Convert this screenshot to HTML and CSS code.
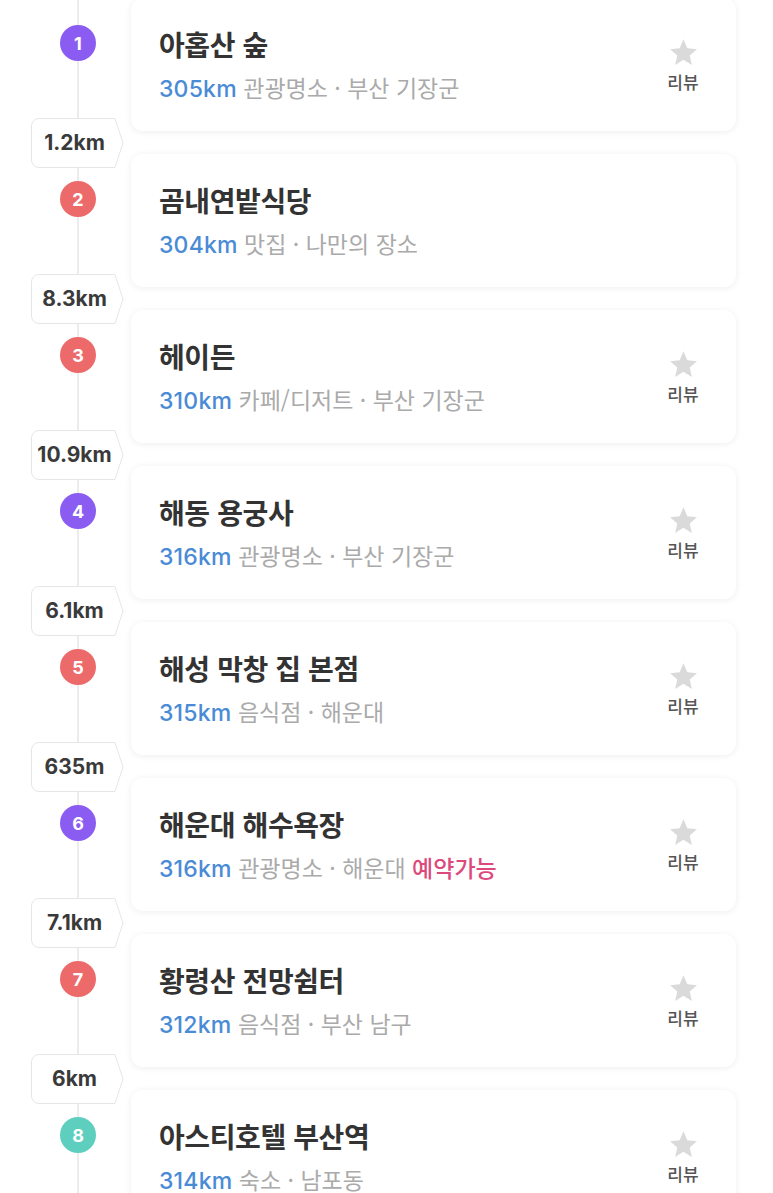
FILE: index.html
```html
<!DOCTYPE html>
<html lang="ko">
<head>
    <meta charset="UTF-8">
    <meta name="viewport" content="width=device-width, initial-scale=1.0">
    <title>일정 경로</title>
    <link rel="stylesheet" href="styles.css">
</head>
<body>

<div class="route">

    <!-- 1 -->
    <div class="stop">
        <div class="rail"><span class="pin purple">1</span></div>
        <div class="card">
            <div class="info">
                <div class="name">아홉산 숲</div>
                <div class="meta"><span class="far">305km</span> 관광명소 · 부산 기장군</div>
            </div>
            <div class="review">
                <svg viewBox="0 0 24 24"><path d="M12 1.8l3 6.9 7.4.7-5.6 4.9 1.7 7.3L12 17.7l-6.5 3.9 1.7-7.3-5.6-4.9 7.4-.7z"/></svg>
                <span>리뷰</span>
            </div>
        </div>
    </div>
    <div class="leg"><span class="dist">1.2km</span></div>

    <!-- 2 -->
    <div class="stop">
        <div class="rail"><span class="pin red">2</span></div>
        <div class="card">
            <div class="info">
                <div class="name">곰내연밭식당</div>
                <div class="meta"><span class="far">304km</span> 맛집 · 나만의 장소</div>
            </div>
        </div>
    </div>
    <div class="leg"><span class="dist">8.3km</span></div>

    <!-- 3 -->
    <div class="stop">
        <div class="rail"><span class="pin red">3</span></div>
        <div class="card">
            <div class="info">
                <div class="name">헤이든</div>
                <div class="meta"><span class="far">310km</span> 카페/디저트 · 부산 기장군</div>
            </div>
            <div class="review">
                <svg viewBox="0 0 24 24"><path d="M12 1.8l3 6.9 7.4.7-5.6 4.9 1.7 7.3L12 17.7l-6.5 3.9 1.7-7.3-5.6-4.9 7.4-.7z"/></svg>
                <span>리뷰</span>
            </div>
        </div>
    </div>
    <div class="leg"><span class="dist">10.9km</span></div>

    <!-- 4 -->
    <div class="stop">
        <div class="rail"><span class="pin purple">4</span></div>
        <div class="card">
            <div class="info">
                <div class="name">해동 용궁사</div>
                <div class="meta"><span class="far">316km</span> 관광명소 · 부산 기장군</div>
            </div>
            <div class="review">
                <svg viewBox="0 0 24 24"><path d="M12 1.8l3 6.9 7.4.7-5.6 4.9 1.7 7.3L12 17.7l-6.5 3.9 1.7-7.3-5.6-4.9 7.4-.7z"/></svg>
                <span>리뷰</span>
            </div>
        </div>
    </div>
    <div class="leg"><span class="dist">6.1km</span></div>

    <!-- 5 -->
    <div class="stop">
        <div class="rail"><span class="pin red">5</span></div>
        <div class="card">
            <div class="info">
                <div class="name">해성 막창 집 본점</div>
                <div class="meta"><span class="far">315km</span> 음식점 · 해운대</div>
            </div>
            <div class="review">
                <svg viewBox="0 0 24 24"><path d="M12 1.8l3 6.9 7.4.7-5.6 4.9 1.7 7.3L12 17.7l-6.5 3.9 1.7-7.3-5.6-4.9 7.4-.7z"/></svg>
                <span>리뷰</span>
            </div>
        </div>
    </div>
    <div class="leg"><span class="dist">635m</span></div>

    <!-- 6 -->
    <div class="stop">
        <div class="rail"><span class="pin purple">6</span></div>
        <div class="card">
            <div class="info">
                <div class="name">해운대 해수욕장</div>
                <div class="meta"><span class="far">316km</span> 관광명소 · 해운대 <span class="book">예약가능</span></div>
            </div>
            <div class="review">
                <svg viewBox="0 0 24 24"><path d="M12 1.8l3 6.9 7.4.7-5.6 4.9 1.7 7.3L12 17.7l-6.5 3.9 1.7-7.3-5.6-4.9 7.4-.7z"/></svg>
                <span>리뷰</span>
            </div>
        </div>
    </div>
    <div class="leg"><span class="dist">7.1km</span></div>

    <!-- 7 -->
    <div class="stop">
        <div class="rail"><span class="pin red">7</span></div>
        <div class="card">
            <div class="info">
                <div class="name">황령산 전망쉼터</div>
                <div class="meta"><span class="far">312km</span> 음식점 · 부산 남구</div>
            </div>
            <div class="review">
                <svg viewBox="0 0 24 24"><path d="M12 1.8l3 6.9 7.4.7-5.6 4.9 1.7 7.3L12 17.7l-6.5 3.9 1.7-7.3-5.6-4.9 7.4-.7z"/></svg>
                <span>리뷰</span>
            </div>
        </div>
    </div>
    <div class="leg"><span class="dist">6km</span></div>

    <!-- 8 -->
    <div class="stop">
        <div class="rail"><span class="pin teal">8</span></div>
        <div class="card">
            <div class="info">
                <div class="name">아스티호텔 부산역</div>
                <div class="meta"><span class="far">314km</span> 숙소 · 남포동</div>
            </div>
            <div class="review">
                <svg viewBox="0 0 24 24"><path d="M12 1.8l3 6.9 7.4.7-5.6 4.9 1.7 7.3L12 17.7l-6.5 3.9 1.7-7.3-5.6-4.9 7.4-.7z"/></svg>
                <span>리뷰</span>
            </div>
        </div>
    </div>

</div>

</body>
</html>
```

FILE: styles.css
```css
body {
    font-family: Inter, 'Noto Sans CJK KR', sans-serif;
    background-color: #ffffff;
    margin: 0;
    color: #333;
}

/* vertical timeline line drawn behind the pins */
.route {
    margin-top: -2px;
    padding-right: 37px;
    background: linear-gradient(#ececec, #ececec) 77px 0 / 2px 100% no-repeat;
}

.stop {
    display: flex;
}

.rail {
    width: 131px;
    flex-shrink: 0;
    padding: 27px 0 0 60px;
    box-sizing: border-box;
}

.pin {
    width: 36px;
    height: 36px;
    border-radius: 50%;
    color: white;
    font-size: 18px;
    font-weight: 700;
    display: flex;
    align-items: center;
    justify-content: center;
}

.pin.purple { background-color: #8b5cf1; }
.pin.red { background-color: #ed6a6a; }
.pin.teal { background-color: #5ecfbf; }

.card {
    flex: 1;
    height: 133px;
    box-sizing: border-box;
    background-color: white;
    border-radius: 12px;
    box-shadow: 0 1px 7px rgba(0, 0, 0, 0.07);
    display: flex;
    align-items: center;
    padding: 0 33px 0 28px;
}

.info {
    flex: 1;
}

.name {
    font-family: 'Noto Sans CJK KR', sans-serif;
    font-size: 28px;
    font-weight: 700;
    line-height: 38px;
    color: #333;
    letter-spacing: -0.4px;
}

.meta {
    margin-top: 8px;
    font-size: 23px;
    line-height: 32px;
    color: #aaa;
    font-family: 'Noto Sans CJK KR', sans-serif;
}

.meta .far {
    font-family: Inter, sans-serif;
    font-weight: 500;
    color: #4a8bd6;
    letter-spacing: 0.2px;
}

.meta .book {
    color: #dc4a7d;
    font-weight: 500;
}

.review {
    width: 40px;
    display: flex;
    flex-direction: column;
    align-items: center;
}

.review svg {
    width: 31px;
    height: 31px;
    fill: #dadada;
}

.review span {
    margin-top: 3px;
    font-family: 'Noto Sans CJK KR', sans-serif;
    font-size: 17px;
    font-weight: 500;
    line-height: 22px;
    color: #555;
}

/* distance between two stops, sits in the gap */
.leg {
    height: 23px;
    display: flex;
    align-items: center;
}

.dist {
    margin-left: 31px;
    width: 93px;
    height: 50px;
    padding-right: 6px;
    box-sizing: border-box;
    display: flex;
    align-items: center;
    justify-content: center;
    font-size: 21px;
    font-weight: 700;
    color: #3a3a3a;
    background: url("data:image/svg+xml,%3Csvg xmlns='http://www.w3.org/2000/svg' width='93' height='50'%3E%3Cpath d='M8 0.5H84L92 25L84 49.5H8A7.5 7.5 0 0 1 0.5 42V8A7.5 7.5 0 0 1 8 0.5Z' fill='white' stroke='%23e6e6e6'/%3E%3C/svg%3E") no-repeat;
}
```
